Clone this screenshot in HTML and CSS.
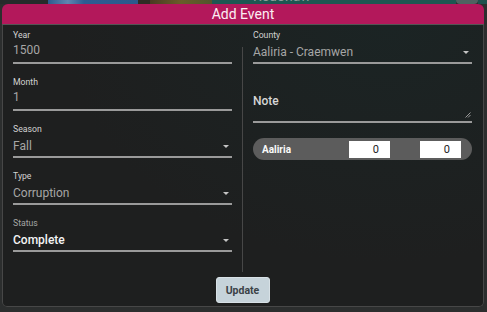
FILE: index.html
```html
<!DOCTYPE html>
<html>
<head>
<meta charset="utf-8">
<link rel="stylesheet" href="styles.css">
</head>
<body>
<div class="map">
  <div class="seg seg-dark"></div>
  <div class="seg seg-blue"></div>
  <div class="seg seg-gap"></div>
  <div class="seg seg-olive"></div>
  <div class="seg seg-teal"><span class="map-label">Redonaw</span></div>
  <div class="seg seg-grey"></div>
  <div class="seg seg-teal2"></div>
</div>
<div class="dialog">
  <div class="header">Add Event</div>
  <div class="main">
    <div class="form">
      <div class="col">
        <div class="field">
          <div class="label">Year</div>
          <div class="value">1500</div>
        </div>
        <div class="field">
          <div class="label">Month</div>
          <div class="value">1</div>
        </div>
        <div class="field select">
          <div class="label">Season</div>
          <div class="value">Fall<span class="arrow"></span></div>
        </div>
        <div class="field select">
          <div class="label">Type</div>
          <div class="value">Corruption<span class="arrow"></span></div>
        </div>
        <div class="field select">
          <div class="label dim">Status</div>
          <div class="value bright">Complete<span class="arrow"></span></div>
        </div>
      </div>
      <div class="divider"></div>
      <div class="col">
        <div class="field select">
          <div class="label">County</div>
          <div class="value">Aaliria - Craemwen<span class="arrow"></span></div>
        </div>
        <div class="note">
          <span class="note-label">Note</span>
          <svg class="resize" width="6" height="6" viewBox="0 0 6 6"><path d="M5.5 0.5 L0.5 5.5 M5.5 3 L3 5.5" stroke="#9a9a9a" stroke-width="1" fill="none"/></svg>
        </div>
        <div class="pill">
          <span class="pill-name">Aaliria</span>
          <div class="pill-inputs">
            <span class="num">0</span>
            <span class="num">0</span>
          </div>
        </div>
      </div>
    </div>
    <div class="footer">
      <button class="btn">Update</button>
    </div>
  </div>
</div>
</body>
</html>
```
FILE: styles.css
```css
* { box-sizing: border-box; }
body {
  margin: 0;
  width: 487px;
  height: 312px;
  overflow: hidden;
  background: #2c2e2e;
  font-family: Roboto, "Liberation Sans", sans-serif;
}
.map {
  height: 4px;
  display: flex;
  overflow: hidden;
}
.seg { height: 4px; }
.seg-dark { width: 48px; background: #262b2b; }
.seg-blue { width: 90px; background: linear-gradient(90deg, #2c5a8e 0%, #5f86b0 22%, #2d5c92 40%, #2b5a8c 100%); }
.seg-gap { width: 12px; background: #2e2c24; }
.seg-olive { width: 62px; background: linear-gradient(90deg, #4a3a22, #6a5d2a 50%, #52552c); }
.seg-teal { flex: 1; background: #1d5752; position: relative; overflow: hidden; }
.seg-grey { width: 22px; background: #4f6361; border-radius: 0 0 10px 10px; }
.seg-teal2 { width: 9px; background: #1d524e; }
.map-label {
  position: absolute;
  left: 41px;
  top: -12px;
  font-size: 14px;
  line-height: 16px;
  color: #8c9e9c;
}
.dialog {
  margin: 0 3px 0 2px;
  height: 303px;
  display: flex;
  flex-direction: column;
  border-radius: 6px 6px 5px 5px;
  overflow: hidden;
}
.header {
  flex: none;
  height: 21px;
  background: #b3185b;
  color: #fbeef3;
  font-size: 14px;
  line-height: 20px;
  text-align: center;
  border-bottom: 1px solid #555;
}
.main {
  flex: 1;
  display: flex;
  flex-direction: column;
  background: radial-gradient(ellipse at 80% 0%, #1b2424 0%, #1e1f1f 60%);
  border: 1px solid #474747;
  border-top: none;
  border-radius: 0 0 5px 5px;
  padding: 0 11px 0 10px;
}
.form {
  flex: 1;
  display: grid;
  grid-template-columns: 219px 1px 219px;
  column-gap: 10px;
  padding-top: 4px;
}
.col {
  display: flex;
  flex-direction: column;
  gap: 12px;
}
.divider {
  margin-top: 18px;
  background: #474747;
}
.field {
  border-bottom: 2px solid #9a9a9a;
  padding-bottom: 3px;
}
.label {
  font-size: 8.7px;
  line-height: 12px;
  color: #d2d2d2;
}
.label.dim { color: #a5a5a5; }
.value {
  font-size: 12px;
  line-height: 18px;
  color: #a6a6a6;
  display: flex;
  align-items: center;
  justify-content: space-between;
}
.select { padding-bottom: 1px; }
.select .value { padding-top: 2px; }
.value.bright { color: #f4f4f4; font-weight: 500; }
.arrow {
  width: 0;
  height: 0;
  margin-right: 3px;
  border-left: 3.5px solid transparent;
  border-right: 3.5px solid transparent;
  border-top: 3.5px solid #c4c4c4;
}
.note {
  position: relative;
  height: 47px;
  padding-top: 14px;
  border-bottom: 2px solid #9a9a9a;
}
.note-label {
  font-size: 12px;
  line-height: 16px;
  font-weight: 500;
  color: #d6d6d6;
}
.resize {
  position: absolute;
  right: 1px;
  bottom: 3px;
}
.pill {
  margin-top: 3px;
  height: 22px;
  border-radius: 11px;
  background: #5c5c5c;
  display: flex;
  align-items: center;
  padding: 0 11px 0 9px;
}
.pill-name {
  flex: 1;
  font-size: 10px;
  font-weight: 700;
  color: #fafafa;
}
.pill-inputs {
  display: flex;
  gap: 30px;
}
.num {
  width: 41px;
  height: 17px;
  background: #ffffff;
  color: #222;
  font-size: 11px;
  line-height: 17px;
  text-align: right;
  padding-right: 11px;
}
.footer {
  flex: none;
  display: flex;
  justify-content: center;
  padding: 5px 0 3px;
}
.btn {
  width: 54px;
  height: 26px;
  margin: 0;
  padding: 0;
  background: #c6d3da;
  border: 1px solid #d8e1e6;
  border-radius: 3px;
  color: #3b4247;
  font-family: Roboto, "Liberation Sans", sans-serif;
  font-size: 10.5px;
  font-weight: 700;
}
```
